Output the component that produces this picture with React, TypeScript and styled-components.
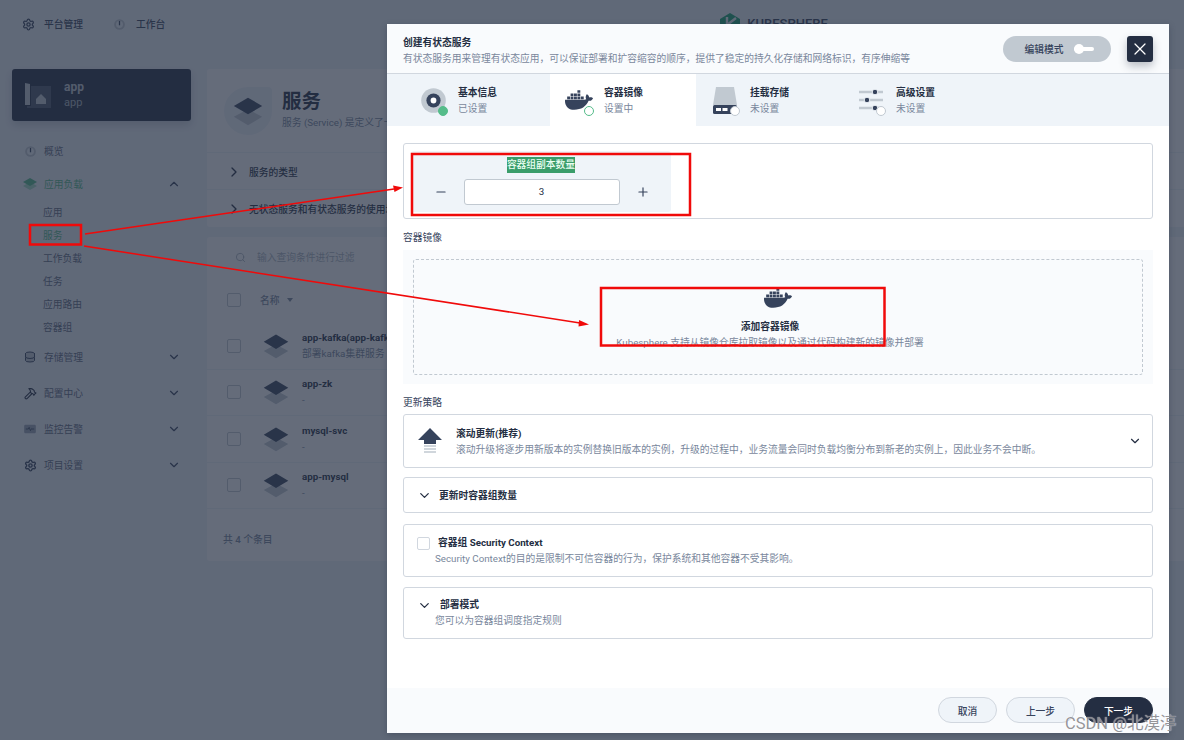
import React from "react";
import styled, { createGlobalStyle } from "styled-components";
import { FaDocker } from "react-icons/fa";
import { ChevronDown, ChevronRight, ChevronUp, Database, Hammer, Minus, Plus, Search, Settings, X } from "lucide-react";

const FONT = `Roboto, "Noto Sans CJK SC", sans-serif`;

const GlobalStyle = createGlobalStyle`
  html, body {
    margin: 0;
    padding: 0;
    background: #eff4f9;
  }
  * {
    box-sizing: border-box;
  }
`;

const Stack = ({ size = 36 }: { size?: number }) => (
  <svg width={size} height={size} viewBox="0 0 36 36">
    <path d="M18 16 L35 25 L18 35 L1 25 Z" fill="#c1c9d1" />
    <path d="M18 2 L35 12 L18 22 L1 12 Z" fill="#36435c" />
  </svg>
);

const Gauge = () => (
  <svg width="11" height="11" viewBox="0 0 14 14">
    <circle cx="7" cy="7" r="6.8" fill="#c1c9d1" />
    <circle cx="7" cy="7" r="4.4" fill="#eff4f9" />
    <path d="M6.2 2.5h1.6v5.5H6.2z" fill="#36435c" />
  </svg>
);

const Pulse = () => (
  <svg width="12" height="10" viewBox="0 0 14 12">
    <rect width="14" height="10" y="1" rx="1.5" fill="#9aa5b5" />
    <path d="M2 6h3l1-2 1.5 4L9 5.5l.6.5H12" fill="none" stroke="#36435c" strokeWidth="1" />
  </svg>
);

const Disk = () => (
  <svg width="25" height="25" viewBox="0 0 26 26">
    <circle cx="13" cy="13" r="12.8" fill="#c1c9d1" />
    <circle cx="13" cy="13" r="7.4" fill="#36435c" />
    <circle cx="13" cy="13" r="3" fill="#fff" />
  </svg>
);

const Drive = () => (
  <svg width="24" height="27" viewBox="0 0 24 27">
    <path d="M3 0h18l3 18H0z" fill="#c1c9d1" />
    <rect y="18" width="24" height="9" rx="1.5" fill="#36435c" />
    <rect x="3" y="21" width="5" height="3" fill="#fff" />
    <rect x="9.5" y="21" width="5" height="3" fill="#fff" />
  </svg>
);

const Sliders = () => (
  <svg width="26" height="26" viewBox="0 0 26 26">
    <path d="M1 5h24M1 13h24M1 21h24" stroke="#c1c9d1" strokeWidth="2.4" />
    <circle cx="17" cy="5" r="2.8" fill="#36435c" stroke="#eff4f9" />
    <circle cx="9" cy="13" r="2.8" fill="#36435c" stroke="#eff4f9" />
    <circle cx="17" cy="21" r="2.8" fill="#36435c" stroke="#eff4f9" />
  </svg>
);

const RollingIcon = () => (
  <svg width="24" height="26" viewBox="0 0 24 26">
    <path d="M12 0 L24 12 L18 12 L18 16 L6 16 L6 12 L0 12 Z" fill="#36435c" />
    <path d="M6 18h12M6 21h12M6 24h12" stroke="#c1c9d1" strokeWidth="1.6" />
  </svg>
);

const Logo = () => (
  <svg width="20" height="24" viewBox="0 0 20 24">
    <path d="M10 0 L20 6 L20 18 L10 24 L0 18 L0 6 Z" fill="#16a571" />
    <path d="M7 4 L7 20 M7 12 L16 5 M7 12 L16 19" stroke="#eff4f9" strokeWidth="2.4" fill="none" />
  </svg>
);

const Annotations = () => (
  <AnnotationLayer viewBox="0 0 1184 740">
    <g fill="none" stroke="#f00a0a" strokeWidth="2.5">
      <rect x="30" y="225" width="51" height="19.5" />
      <rect x="412" y="154" width="278" height="61" />
      <rect x="601" y="288" width="283.5" height="57.5" />
    </g>
    <g fill="none" stroke="#f00a0a" strokeWidth="1.5">
      <path d="M85 234 L394 189" />
      <path d="M84 246 L580 323" />
    </g>
    <path d="M403 187.5 L393 185.5 L394.5 192 Z" fill="#f00a0a" />
    <path d="M589 324.5 L579 320 L578.5 326.5 Z" fill="#f00a0a" />
  </AnnotationLayer>
);

const subNav = ["应用", "服务", "工作负载", "任务", "应用路由", "容器组"];
const services = [
  { name: "app-kafka(app-kafka)", desc: "部署kafka集群服务" },
  { name: "app-zk", desc: "-" },
  { name: "mysql-svc", desc: "-" },
  { name: "app-mysql", desc: "-" },
];

const App = () => {
  return (
    <Page>
      <GlobalStyle />
      <TopBar>
        <TopLink>
          <Settings size={13} strokeWidth={2.4} color="#36435c" />
          平台管理
        </TopLink>
        <TopLink $tight>
          <Gauge />
          工作台
        </TopLink>
        <LogoBox>
          <Logo />
          <LogoText>KUBESPHERE</LogoText>
        </LogoBox>
      </TopBar>

      <Body>
        <Sidebar>
          <AppCard>
            <svg width="26" height="26" viewBox="0 0 26 26">
              <path d="M0 1l5 1v21H0z" fill="#c1c9d1" />
              <path d="M6 4h20v22H2v-2h4z" fill="#4a5568" />
              <path d="M11 17l5-5 5 5v5H11z" fill="#c1c9d1" />
            </svg>
            <AppText>
              <AppName>app</AppName>
              <AppSub>app</AppSub>
            </AppText>
          </AppCard>
          <NavList>
            <NavItem>
              <NavIcon><Gauge /></NavIcon>
              概览
            </NavItem>
            <NavItem $active>
              <NavIcon>
                <svg width="14" height="14" viewBox="0 0 14 14">
                  <path d="M7 5L14 9 7 13 0 9z" fill="#a5dcc2" />
                  <path d="M7 1L14 5 7 9 0 5z" fill="#55bc8a" />
                </svg>
              </NavIcon>
              应用负载
              <NavChevron><ChevronUp size={14} /></NavChevron>
            </NavItem>
            <SubNav>
              {subNav.map((item) => (
                <SubItem key={item} $active={item === "服务"}>{item}</SubItem>
              ))}
            </SubNav>
            <NavItem $gap={10}>
              <NavIcon><Database size={12} color="#36435c" fill="#c1c9d1" /></NavIcon>
              存储管理
              <NavChevron><ChevronDown size={14} /></NavChevron>
            </NavItem>
            <NavItem $gap={20}>
              <NavIcon><Hammer size={13} color="#242e42" /></NavIcon>
              配置中心
              <NavChevron><ChevronDown size={14} /></NavChevron>
            </NavItem>
            <NavItem $gap={20}>
              <NavIcon><Pulse /></NavIcon>
              监控告警
              <NavChevron><ChevronDown size={14} /></NavChevron>
            </NavItem>
            <NavItem $gap={20}>
              <NavIcon><Settings size={13} strokeWidth={2.6} color="#36435c" /></NavIcon>
              项目设置
              <NavChevron><ChevronDown size={14} /></NavChevron>
            </NavItem>
          </NavList>
        </Sidebar>

        <Main>
          <BannerCard>
            <BannerHead>
              <BannerBadge><Stack size={30} /></BannerBadge>
              <BannerText>
                <BannerTitle>服务</BannerTitle>
                <BannerSub>服务 (Service) 是定义了一类容器组的逻辑集合和一个用于访问它们的策略。</BannerSub>
              </BannerText>
            </BannerHead>
            <BannerRow>
              <ChevronRight size={16} />
              服务的类型
            </BannerRow>
            <BannerRow>
              <ChevronRight size={16} />
              无状态服务和有状态服务的使用场景
            </BannerRow>
          </BannerCard>

          <TableCard>
            <SearchRow>
              <Search size={11} color="#abb4be" />
              输入查询条件进行过滤
            </SearchRow>
            <HeadRow>
              <Check />
              <HeadLabel>名称<SortCaret /></HeadLabel>
            </HeadRow>
            {services.map((s) => (
              <ServiceRow key={s.name}>
                <Check />
                <RowIcon><Stack size={26} /></RowIcon>
                <div>
                  <ServiceName>{s.name}</ServiceName>
                  <ServiceDesc>{s.desc}</ServiceDesc>
                </div>
              </ServiceRow>
            ))}
            <TableFoot>共 4 个条目</TableFoot>
          </TableCard>
        </Main>
      </Body>

      <Backdrop />

      <Modal>
        <ModalHead>
          <ModalHeadText>
            <ModalTitle>创建有状态服务</ModalTitle>
            <ModalSub>有状态服务用来管理有状态应用，可以保证部署和扩容缩容的顺序，提供了稳定的持久化存储和网络标识，有序伸缩等</ModalSub>
          </ModalHeadText>
          <ModalActions>
            <EditMode>
              编辑模式
              <Toggle />
            </EditMode>
            <CloseButton><X size={20} strokeWidth={1.5} /></CloseButton>
          </ModalActions>
        </ModalHead>

        <Tabs>
          <Tab>
            <TabIcon><Disk /><StatusDot $state="done" /></TabIcon>
            <TabText><TabTitle>基本信息</TabTitle><TabSub>已设置</TabSub></TabText>
          </Tab>
          <Tab $active>
            <TabIcon><FaDocker size={28} color="#36435c" /><StatusDot $state="current" /></TabIcon>
            <TabText><TabTitle>容器镜像</TabTitle><TabSub>设置中</TabSub></TabText>
          </Tab>
          <Tab>
            <TabIcon><Drive /><StatusDot $state="todo" /></TabIcon>
            <TabText><TabTitle>挂载存储</TabTitle><TabSub>未设置</TabSub></TabText>
          </Tab>
          <Tab>
            <TabIcon><Sliders /><StatusDot $state="todo" /></TabIcon>
            <TabText><TabTitle>高级设置</TabTitle><TabSub>未设置</TabSub></TabText>
          </Tab>
        </Tabs>

        <ModalBody>
          <ReplicaBox>
            <ReplicaPanel>
              <ReplicaLabel>容器组副本数量</ReplicaLabel>
              <ReplicaControl>
                <StepButton><Minus size={14} /></StepButton>
                <ReplicaInput>3</ReplicaInput>
                <StepButton><Plus size={14} /></StepButton>
              </ReplicaControl>
            </ReplicaPanel>
          </ReplicaBox>

          <SectionLabel $bottom={5}>容器镜像</SectionLabel>
          <ImageBox>
            <ImageDrop>
              <FaDocker size={28} color="#36435c" />
              <ImageTitle>添加容器镜像</ImageTitle>
              <ImageDesc>Kubesphere 支持从镜像仓库拉取镜像以及通过代码构建新的镜像并部署</ImageDesc>
            </ImageDrop>
          </ImageBox>

          <SectionLabel $bottom={4}>更新策略</SectionLabel>
          <StrategyCard>
            <RollingIcon />
            <StrategyText>
              <CardTitle>滚动更新(推荐)</CardTitle>
              <CardDesc>滚动升级将逐步用新版本的实例替换旧版本的实例，升级的过程中，业务流量会同时负载均衡分布到新老的实例上，因此业务不会中断。</CardDesc>
            </StrategyText>
            <ChevronDown size={14} color="#242e42" />
          </StrategyCard>

          <FoldCard>
            <ChevronDown size={15} color="#242e42" />
            <CardTitle>更新时容器组数量</CardTitle>
          </FoldCard>

          <OptionCard>
            <OptionHead>
              <OptionCheck />
              <CardTitle>容器组 Security Context</CardTitle>
            </OptionHead>
            <CardDesc>Security Context的目的是限制不可信容器的行为，保护系统和其他容器不受其影响。</CardDesc>
          </OptionCard>

          <OptionCard $tight>
            <OptionHead>
              <ChevronDown size={15} color="#242e42" />
              <CardTitle>部署模式</CardTitle>
            </OptionHead>
            <CardDesc>您可以为容器组调度指定规则</CardDesc>
          </OptionCard>
        </ModalBody>

        <ModalFoot>
          <FootButton>取消</FootButton>
          <FootButton>上一步</FootButton>
          <FootButton $primary>下一步</FootButton>
        </ModalFoot>
      </Modal>

      <Annotations />
      <Watermark>CSDN @北漠渟</Watermark>
    </Page>
  );
};

export default App;

const Page = styled.div`
  position: relative;
  width: 1184px;
  height: 740px;
  overflow: hidden;
  background: #eff4f9;
  font-family: ${FONT};
  font-size: 9.75px;
  color: #242e42;
`;

const TopBar = styled.div`
  display: flex;
  align-items: center;
  height: 48px;
  padding-left: 22px;
  gap: 31px;
`;

const TopLink = styled.div<{ $tight?: boolean }>`
  display: flex;
  align-items: center;
  gap: ${(p) => (p.$tight ? 11 : 9)}px;
  font-weight: 500;
  color: #36435c;
`;

const LogoBox = styled.div`
  display: flex;
  align-items: flex-start;
  gap: 7px;
  margin: 2px 0 0 524px;
`;

const LogoText = styled.div`
  margin-top: 2px;
  font-size: 13px;
  line-height: 18px;
  font-weight: 500;
  color: #36435c;
`;

const Body = styled.div`
  display: flex;
  padding: 21px 0 0 12px;
`;

const Sidebar = styled.div`
  width: 179px;
  flex-shrink: 0;
`;

const AppCard = styled.div`
  display: flex;
  align-items: center;
  gap: 13px;
  height: 52px;
  padding: 0 13px;
  background: #242e42;
  border-radius: 3px;
  box-shadow: 0 4px 8px rgba(36, 46, 66, 0.2);
`;

const AppText = styled.div`
  line-height: 16px;
`;

const AppName = styled.div`
  font-size: 12px;
  font-weight: 700;
  color: #c1c9d1;
`;

const AppSub = styled.div`
  font-size: 11px;
  color: #abb4be;
`;

const NavList = styled.div`
  padding: 22px 0 0 11px;
`;

const NavItem = styled.div<{ $active?: boolean; $gap?: number }>`
  display: flex;
  align-items: center;
  height: 16px;
  margin-top: ${(p) => p.$gap ?? 17}px;
  color: ${(p) => (p.$active ? "#55bc8a" : "#5f6b7f")};
  &:first-child {
    margin-top: 0;
  }
`;

const NavIcon = styled.span`
  display: flex;
  justify-content: center;
  width: 14px;
  margin-right: 7px;
`;

const NavChevron = styled.span`
  display: flex;
  margin-left: auto;
  margin-right: 10px;
  color: #36435c;
`;

const SubNav = styled.div`
  padding: 9px 0 0 20px;
`;

const SubItem = styled.div<{ $active?: boolean }>`
  height: 23px;
  line-height: 23px;
  color: ${(p) => (p.$active ? "#55bc8a" : "#5f6b7f")};
`;

const Main = styled.div`
  flex: 1;
  margin-left: 16px;
  margin-right: -2px;
  min-width: 0;
`;

const BannerCard = styled.div`
  background: #fff;
  border-radius: 3px;
  height: 158px;
  overflow: hidden;
`;

const BannerHead = styled.div`
  display: flex;
  align-items: center;
  gap: 10px;
  height: 84px;
  padding: 0 17px;
  border-bottom: 1px solid #eff4f9;
`;

const BannerBadge = styled.div`
  display: flex;
  align-items: center;
  justify-content: center;
  width: 48px;
  height: 48px;
  background: #eff4f9;
  border-radius: 50% 4px 50% 50%;
`;

const BannerText = styled.div`
  padding-bottom: 4px;
`;

const BannerTitle = styled.div`
  font-size: 19.5px;
  font-weight: 700;
  line-height: 28px;
`;

const BannerSub = styled.div`
  line-height: 14px;
  color: #79879c;
  white-space: nowrap;
`;

const BannerRow = styled.div`
  display: flex;
  align-items: center;
  gap: 7px;
  height: 37px;
  padding: 1px 0 0 19px;
  font-weight: 500;
  color: #242e42;
  border-bottom: 1px solid #eff4f9;
  &:last-child {
    border-bottom: 0;
  }
`;

const TableCard = styled.div`
  margin-top: 10px;
  height: 324px;
  background: #fff;
  border-radius: 3px;
`;

const SearchRow = styled.div`
  display: flex;
  align-items: center;
  gap: 11px;
  height: 40px;
  padding-left: 28px;
  color: #abb4be;
`;

const HeadRow = styled.div`
  display: flex;
  align-items: center;
  height: 46px;
  padding-left: 20px;
`;

const Check = styled.span`
  width: 14px;
  height: 14px;
  flex-shrink: 0;
  background: #fff;
  border: 1px solid #c1c9d1;
  border-radius: 2px;
`;

const HeadLabel = styled.div`
  display: flex;
  align-items: center;
  gap: 7px;
  margin-left: 19px;
  color: #79879c;
  font-weight: 500;
`;

const SortCaret = styled.span`
  width: 0;
  height: 0;
  border-left: 3.5px solid transparent;
  border-right: 3.5px solid transparent;
  border-top: 4px solid #79879c;
`;

const ServiceRow = styled.div`
  display: flex;
  align-items: center;
  height: 46.5px;
  padding-left: 20px;
  border-bottom: 1px solid #eff4f9;
`;

const RowIcon = styled.span`
  display: flex;
  margin: 0 13px 0 22px;
`;

const ServiceName = styled.div`
  line-height: 16px;
  font-weight: 700;
  color: #242e42;
  white-space: nowrap;
`;

const ServiceDesc = styled.div`
  line-height: 16px;
  color: #79879c;
  white-space: nowrap;
`;

const TableFoot = styled.div`
  padding: 23px 0 0 16px;
  color: #79879c;
  font-weight: 500;
`;

const Backdrop = styled.div`
  position: absolute;
  inset: 0;
  background: rgba(35, 45, 65, 0.7);
`;

const Modal = styled.div`
  position: absolute;
  left: 387px;
  top: 24px;
  width: 782px;
  height: 709px;
  display: flex;
  flex-direction: column;
  background: #fff;
  border-radius: 3px 3px 0 0;
  box-shadow: 0 2px 6px rgba(36, 46, 66, 0.35);
`;

const ModalHead = styled.div`
  display: flex;
  align-items: center;
  justify-content: space-between;
  height: 50px;
  flex-shrink: 0;
  padding: 0 16px;
  background: #f9fbfd;
  border-bottom: 1px solid #d1d7df;
`;

const ModalHeadText = styled.div`
  padding-top: 3px;
`;

const ModalTitle = styled.div`
  font-weight: 700;
  line-height: 17px;
`;

const ModalSub = styled.div`
  line-height: 16px;
  color: #79879c;
  white-space: nowrap;
`;

const ModalActions = styled.div`
  display: flex;
  align-items: center;
  gap: 16px;
`;

const EditMode = styled.div`
  display: flex;
  align-items: center;
  justify-content: center;
  gap: 10px;
  width: 108px;
  height: 26px;
  padding-left: 4px;
  background: #c1c9d1;
  border-radius: 13px;
  font-weight: 500;
  color: #36435c;
`;

const Toggle = styled.span`
  position: relative;
  width: 20px;
  height: 4px;
  background: #fff;
  border-radius: 2px;
  &::before {
    content: "";
    position: absolute;
    left: 0;
    top: -3px;
    width: 10px;
    height: 10px;
    border-radius: 50%;
    background: #fff;
  }
`;

const CloseButton = styled.div`
  display: flex;
  align-items: center;
  justify-content: center;
  width: 26px;
  height: 26px;
  background: #242e42;
  color: #fff;
  border-radius: 3px;
  box-shadow: 0 4px 8px rgba(36, 46, 66, 0.3);
`;

const Tabs = styled.div`
  display: flex;
  height: 52px;
  flex-shrink: 0;
  padding-left: 17px;
  background: #eff4f9;
`;

const Tab = styled.div<{ $active?: boolean }>`
  display: flex;
  align-items: center;
  gap: 11px;
  width: 146px;
  padding-left: 15px;
  background: ${(p) => (p.$active ? "#fff" : "transparent")};
`;

const TabIcon = styled.div`
  position: relative;
  display: flex;
  align-items: center;
  justify-content: center;
  width: 28px;
  height: 28px;
`;

const StatusDot = styled.span<{ $state: "done" | "current" | "todo" }>`
  position: absolute;
  right: -1px;
  bottom: -2px;
  width: 10px;
  height: 10px;
  border-radius: 50%;
  background: ${(p) => (p.$state === "done" ? "#55bc8a" : "#fff")};
  border: 1.5px solid ${(p) => (p.$state === "todo" ? "#c1c9d1" : "#55bc8a")};
`;

const TabText = styled.div`
  padding-bottom: 1px;
`;

const TabTitle = styled.div`
  font-weight: 700;
  line-height: 17px;
  color: #242e42;
`;

const TabSub = styled.div`
  line-height: 15px;
  color: #79879c;
`;

const ModalBody = styled.div`
  flex: 1;
  padding: 17px 16px 0;
`;

const ReplicaBox = styled.div`
  height: 76px;
  padding: 7px;
  border: 1px solid #d1d7df;
  border-radius: 3px;
`;

const ReplicaPanel = styled.div`
  width: 260px;
  height: 61px;
  background: #eff4f9;
  border-radius: 3px;
  text-align: center;
`;

const ReplicaLabel = styled.span`
  display: inline-block;
  margin-top: 6px;
  line-height: 16px;
  font-weight: 500;
  background: #3a9d6a;
  color: #eafff3;
`;

const ReplicaControl = styled.div`
  display: flex;
  align-items: center;
  justify-content: center;
  margin-top: 6px;
  padding-left: 1px;
`;

const StepButton = styled.span`
  display: flex;
  justify-content: center;
  width: 46px;
  color: #36435c;
`;

const ReplicaInput = styled.div`
  width: 156px;
  height: 26px;
  line-height: 24px;
  background: #fff;
  border: 1px solid #c1c9d1;
  border-radius: 3px;
  text-align: center;
`;

const SectionLabel = styled.div<{ $bottom: number }>`
  margin: 12px 0 ${(p) => p.$bottom}px;
  line-height: 14px;
  color: #36435c;
`;

const ImageBox = styled.div`
  height: 134px;
  padding: 9px 10px;
  background: #f9fbfd;
`;

const ImageDrop = styled.div`
  display: flex;
  flex-direction: column;
  align-items: center;
  height: 116px;
  padding-top: 24px;
  border: 1px dashed #c1c9d1;
  border-radius: 3px;
`;

const ImageTitle = styled.div`
  margin: 7px 16px 0 0;
  font-weight: 700;
  line-height: 16px;
`;

const ImageDesc = styled.div`
  margin-right: 16px;
  line-height: 16px;
  color: #79879c;
`;

const Card = styled.div`
  border: 1px solid #d1d7df;
  border-radius: 3px;
`;

const StrategyCard = styled(Card)`
  display: flex;
  align-items: center;
  gap: 14px;
  height: 54px;
  padding: 0 10px 0 14px;
`;

const StrategyText = styled.div`
  flex: 1;
  padding-top: 2px;
`;

const CardTitle = styled.div`
  font-weight: 700;
  line-height: 16px;
  color: #242e42;
`;

const CardDesc = styled.div`
  line-height: 16px;
  color: #79879c;
`;

const FoldCard = styled(Card)`
  display: flex;
  align-items: center;
  gap: 7px;
  height: 36px;
  margin-top: 9px;
  padding: 1px 0 0 13px;
`;

const OptionCard = styled(Card)<{ $tight?: boolean }>`
  height: ${(p) => (p.$tight ? 52 : 53)}px;
  margin-top: ${(p) => (p.$tight ? 10 : 11)}px;
  padding: ${(p) => (p.$tight ? 9 : 10)}px 12px 0 31px;
`;

const OptionHead = styled.div`
  display: flex;
  align-items: center;
  gap: 8px;
  margin-left: -18px;
`;

const OptionCheck = styled.span`
  width: 13px;
  height: 13px;
  background: #fff;
  border: 1px solid #d1d7df;
  border-radius: 2px;
`;

const ModalFoot = styled.div`
  display: flex;
  justify-content: flex-end;
  align-items: center;
  gap: 9px;
  height: 45px;
  flex-shrink: 0;
  padding: 0 16px 1px;
  background: #f9fbfd;
`;

const FootButton = styled.div<{ $primary?: boolean }>`
  display: flex;
  align-items: center;
  justify-content: center;
  width: 69px;
  height: 26px;
  padding-top: 1px;
  border-radius: 13px;
  font-weight: 500;
  background: ${(p) => (p.$primary ? "#242e42" : "#eff4f9")};
  color: ${(p) => (p.$primary ? "#fff" : "#36435c")};
  border: 1px solid ${(p) => (p.$primary ? "#242e42" : "#d1d7df")};
  &:first-child {
    width: 59px;
  }
`;

const AnnotationLayer = styled.svg`
  position: absolute;
  inset: 0;
  width: 1184px;
  height: 740px;
  pointer-events: none;
`;

const Watermark = styled.div`
  position: absolute;
  left: 1065px;
  top: 714px;
  font-size: 16.5px;
  line-height: 20px;
  white-space: nowrap;
  color: rgba(130, 130, 135, 0.85);
  text-shadow: 0 0 1px rgba(255, 255, 255, 0.8);
`;
